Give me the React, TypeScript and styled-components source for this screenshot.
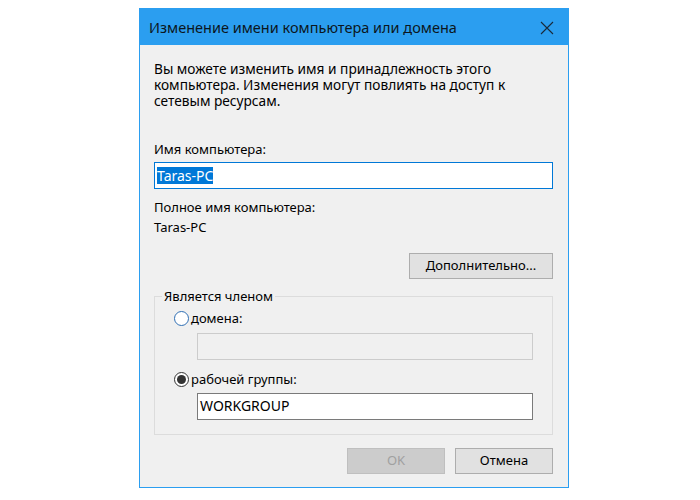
import React from 'react'
import styled, { createGlobalStyle } from 'styled-components'

const GlobalStyle = createGlobalStyle`
  html, body {
    margin: 0;
    padding: 0;
    background: #ffffff;
  }
  body {
    font-family: "Noto Sans", "Open Sans", "DejaVu Sans", sans-serif;
    font-size: 13px;
    color: #000000;
  }
`

const Page = styled.div`
  width: 700px;
  height: 500px;
  padding-top: 8px;
  box-sizing: border-box;
`

const Dialog = styled.div`
  margin-left: 139px;
  width: 430px;
  height: 480px;
  box-sizing: border-box;
  border: 1px solid #2b9ef0;
  background: #f0f0f0;
  display: flex;
  flex-direction: column;
`

const TitleBar = styled.div`
  height: 36px;
  background: #2b9ef0;
  display: flex;
  align-items: center;
  justify-content: space-between;
  padding: 0 14px 0 9px;
`

const Title = styled.div`
  font-size: 14.5px;
  color: #0b1620;
`

const CloseIcon = styled.svg`
  width: 14px;
  height: 14px;
  margin-top: 1px;
`

const Body = styled.div`
  flex: 1;
  display: flex;
  flex-direction: column;
  padding: 16px 15px 0 14px;
  line-height: 15.5px;
`

const Intro = styled.div`
  font-size: 13.7px;
  line-height: 16px;
`

const Text = styled.div<{ $mt?: number }>`
  margin-top: ${p => p.$mt || 0}px;
`

const Field = styled.div<{ $mt?: number; $disabled?: boolean }>`
  margin-top: ${p => p.$mt || 0}px;
  height: 27px;
  box-sizing: border-box;
  border: 1px solid ${p => (p.$disabled ? '#cccccc' : '#7a7a7a')};
  background: ${p => (p.$disabled ? '#f0f0f0' : '#ffffff')};
  display: flex;
  align-items: center;
  padding-left: 2px;
  font-size: 14px;
`

const FocusField = styled(Field)`
  border-color: #0078d7;
`

const Selected = styled.span`
  background: #0078d7;
  color: #ffffff;
  line-height: 17px;
`

const ButtonRow = styled.div<{ $mt: number }>`
  display: flex;
  justify-content: flex-end;
  gap: 10px;
  margin-top: ${p => p.$mt}px;
`

const Button = styled.div<{ $width: number; $disabled?: boolean }>`
  width: ${p => p.$width}px;
  height: 26px;
  box-sizing: border-box;
  display: flex;
  align-items: center;
  justify-content: center;
  background: ${p => (p.$disabled ? '#cccccc' : '#e1e1e1')};
  border: 1px solid ${p => (p.$disabled ? '#bfbfbf' : '#adadad')};
  color: ${p => (p.$disabled ? '#a0a0a0' : '#000000')};
  font-size: 13px;
`

const Group = styled.fieldset`
  margin: 10px 0 0 0;
  padding: 6px 19px 14px 19px;
  border: 1px solid #dcdcdc;
  min-width: 0;
`

const Legend = styled.legend`
  padding: 0 2px;
  margin-left: -12px;
  line-height: 15.5px;
`

const RadioRow = styled.div<{ $mt?: number }>`
  display: flex;
  align-items: center;
  gap: 2px;
  margin-top: ${p => p.$mt || 0}px;
  height: 16px;
`

const RadioCircle = styled.span<{ $checked?: boolean }>`
  width: 15px;
  height: 15px;
  box-sizing: border-box;
  border-radius: 50%;
  border: 1px solid ${p => (p.$checked ? '#333333' : '#2f6fb4')};
  background: #ffffff;
  display: flex;
  align-items: center;
  justify-content: center;
  &::after {
    content: '';
    display: ${p => (p.$checked ? 'block' : 'none')};
    width: 9px;
    height: 9px;
    border-radius: 50%;
    background: #333333;
  }
`

const Indented = styled.div`
  margin-left: 23px;
`

export default function App() {
  return (
    <Page>
      <GlobalStyle />
      <Dialog>
        <TitleBar>
          <Title>Изменение имени компьютера или домена</Title>
          <CloseIcon viewBox="0 0 14 14">
            <path d="M1 1 L13 13 M13 1 L1 13" stroke="#1a2a3a" strokeWidth="1.1" fill="none" />
          </CloseIcon>
        </TitleBar>
        <Body>
          <Intro>
            Вы можете изменить имя и принадлежность этого
            <br />
            компьютера. Изменения могут повлиять на доступ к
            <br />
            сетевым ресурсам.
          </Intro>
          <Text $mt={32.5}>Имя компьютера:</Text>
          <FocusField $mt={5}>
            <Selected>Taras-PC</Selected>
          </FocusField>
          <Text $mt={11}>Полное имя компьютера:</Text>
          <Text $mt={4}>Taras-PC</Text>
          <ButtonRow $mt={18}>
            <Button $width={144}>Дополнительно...</Button>
          </ButtonRow>
          <Group>
            <Legend>Является членом</Legend>
            <RadioRow>
              <RadioCircle />
              <span>домена:</span>
            </RadioRow>
            <Indented>
              <Field $mt={6} $disabled />
            </Indented>
            <RadioRow $mt={12}>
              <RadioCircle $checked />
              <span>рабочей группы:</span>
            </RadioRow>
            <Indented>
              <Field $mt={5}>WORKGROUP</Field>
            </Indented>
          </Group>
          <ButtonRow $mt={13}>
            <Button $width={98} $disabled>OK</Button>
            <Button $width={98}>Отмена</Button>
          </ButtonRow>
        </Body>
      </Dialog>
    </Page>
  )
}
